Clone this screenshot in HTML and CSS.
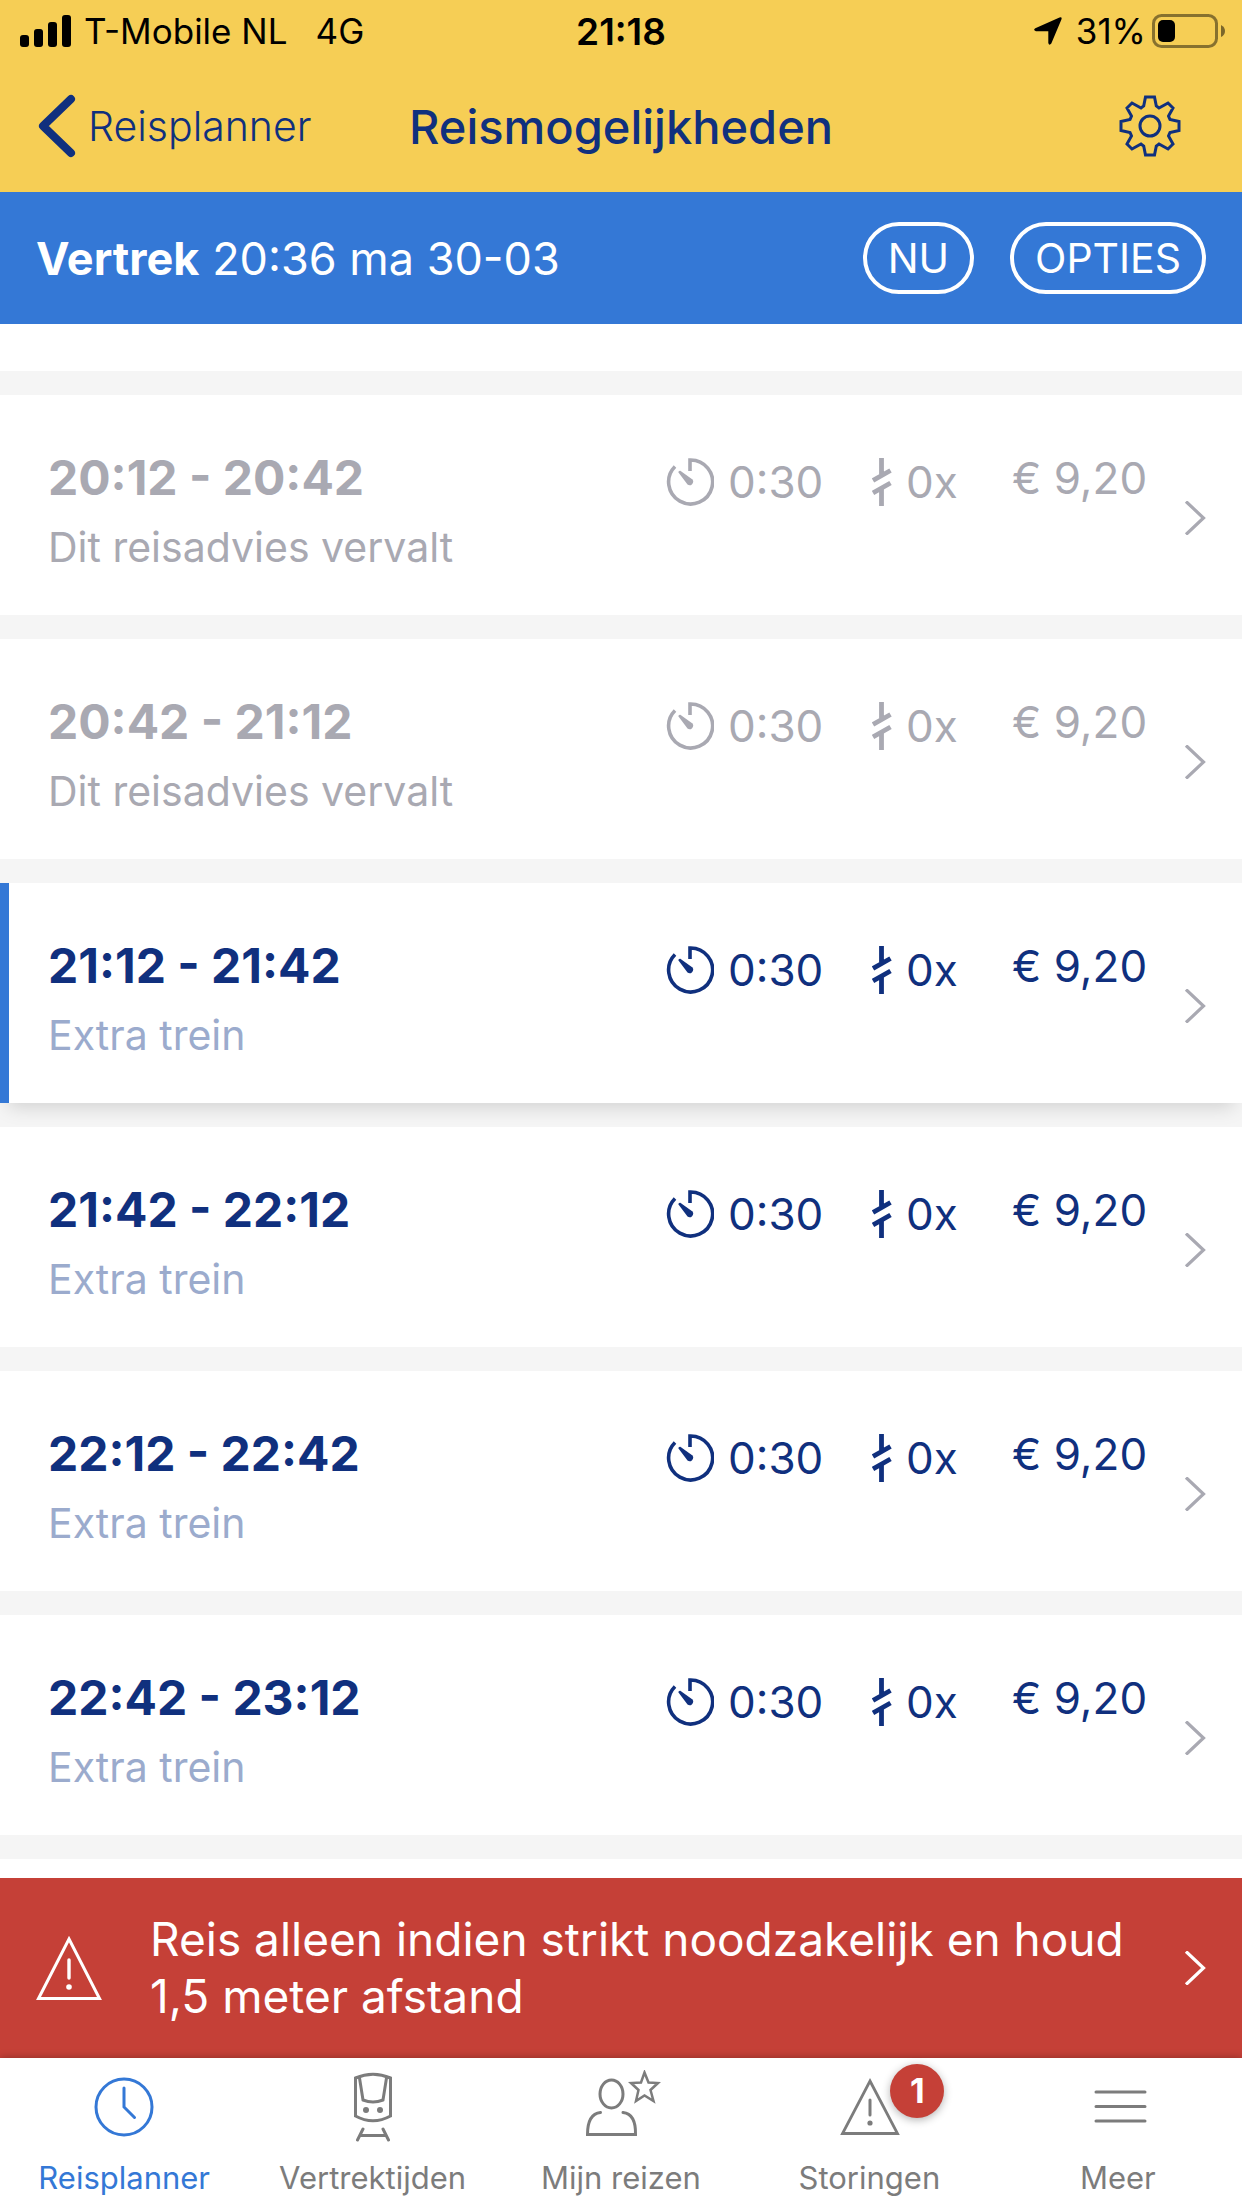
FILE: index.html
```html
<!DOCTYPE html>
<html lang="nl">
<head>
    <meta charset="UTF-8">
    <meta name="viewport" content="width=device-width, initial-scale=1.0">
    <title>Reismogelijkheden</title>
    <link rel="stylesheet" href="styles.css">
</head>
<body>

<!-- Iconen die vaker voorkomen -->
<svg class="sprite" aria-hidden="true">
    <symbol id="duur" viewBox="0 0 48 48">
        <path d="M24 13V2A22 22 0 1 1 9 8.500" fill="none" stroke="currentColor" stroke-width="3.600"/>
        <path d="M12.300 14.200Q12.400 12.500 14.300 12.700L26.500 21.600A3.600 3.600 0 0 1 21.500 26.600Z" fill="currentColor"/>
    </symbol>
    <symbol id="overstap" viewBox="0 0 20 48">
        <path d="M9.500 0V17M1 22.500L18.500 12.500M1 35L18.500 25M9.500 31V48" fill="none" stroke="currentColor" stroke-width="4.800"/>
    </symbol>
    <symbol id="pijl" viewBox="0 0 22 34">
        <path d="M2 0.500L19.500 17L2 33.500" fill="none" stroke="currentColor" stroke-width="3.200"/>
    </symbol>
    <symbol id="waarschuwing" viewBox="0 0 66 66">
        <path d="M33 4L63.500 63.500H2.500Z" fill="none" stroke="currentColor" stroke-width="3"/>
        <path d="M33 25V43" stroke="currentColor" stroke-width="3.400" stroke-linecap="round"/>
        <circle cx="33" cy="52" r="2.800" fill="currentColor"/>
    </symbol>
</svg>

<header class="header">
    <div class="status">
        <div class="status-left">
            <svg class="signal" viewBox="0 0 52 32">
                <rect x="0" y="20" width="9" height="12" rx="3"/>
                <rect x="14" y="14" width="9" height="18" rx="3"/>
                <rect x="28" y="7" width="9" height="25" rx="3"/>
                <rect x="42" y="0" width="9" height="32" rx="3"/>
            </svg>
            <span>T-Mobile NL</span>
            <span class="network">4G</span>
        </div>
        <div class="clock">21:18</div>
        <div class="status-right">
            <svg class="location" viewBox="0 0 28 28"><path d="M25.500 0.500Q28.500 -0.500 27.300 2.800L17.300 26.500Q15.200 29 14.300 26V14.200H2Q-1.300 13.300 1.300 11.200Z"/></svg>
            <span>31%</span>
            <svg class="battery" viewBox="0 0 74 36">
                <rect x="1.500" y="2.500" width="63" height="31" rx="8" fill="none" stroke="#000" stroke-opacity="0.45" stroke-width="3"/>
                <rect x="6" y="7" width="17" height="22" rx="5"/>
                <path d="M69 12Q73 14 73 18T69 24Z" fill-opacity="0.500"/>
            </svg>
        </div>
    </div>
    <div class="navbar">
        <a class="back" href="#">
            <svg viewBox="0 0 38 64"><path d="M33 5L5 32L33 59" fill="none" stroke="currentColor" stroke-width="8" stroke-linecap="round" stroke-linejoin="round"/></svg>
            Reisplanner
        </a>
        <h1>Reismogelijkheden</h1>
        <button class="settings" type="button" aria-label="Instellingen">
            <svg viewBox="0 0 64 64" fill="none" stroke="currentColor" stroke-width="3">
                <path d="M27.500 3H36.500L38.300 12L41 14L50 9L55 14L50.500 22L52 25.500L61 27.500V36.500L52 38.500L50.500 42L55 50L50 55L41 50L38.300 52L36.500 61H27.500L25.700 52L23 50L14 55L9 50L13.500 42L12 38.500L3 36.500V27.500L12 25.500L13.500 22L9 14L14 9L23 14L25.700 12Z"/>
                <circle cx="32" cy="32" r="10"/>
            </svg>
        </button>
    </div>
</header>

<div class="departure">
    <p><strong>Vertrek</strong> 20:36 ma 30-03</p>
    <button type="button">NU</button>
    <button type="button">OPTIES</button>
</div>

<main class="trips">
    <div class="trip-top"></div>
    <a class="trip expired" href="#">
        <div class="info"><h2>20:12 - 20:42</h2><p>Dit reisadvies vervalt</p></div>
        <div class="stat duration"><svg><use href="#duur"/></svg>0:30</div>
        <div class="stat changes"><svg><use href="#overstap"/></svg>0x</div>
        <div class="stat price">€ 9,20</div>
        <svg class="arrow"><use href="#pijl"/></svg>
    </a>
    <a class="trip expired" href="#">
        <div class="info"><h2>20:42 - 21:12</h2><p>Dit reisadvies vervalt</p></div>
        <div class="stat duration"><svg><use href="#duur"/></svg>0:30</div>
        <div class="stat changes"><svg><use href="#overstap"/></svg>0x</div>
        <div class="stat price">€ 9,20</div>
        <svg class="arrow"><use href="#pijl"/></svg>
    </a>
    <a class="trip selected" href="#">
        <div class="info"><h2>21:12 - 21:42</h2><p>Extra trein</p></div>
        <div class="stat duration"><svg><use href="#duur"/></svg>0:30</div>
        <div class="stat changes"><svg><use href="#overstap"/></svg>0x</div>
        <div class="stat price">€ 9,20</div>
        <svg class="arrow"><use href="#pijl"/></svg>
    </a>
    <a class="trip" href="#">
        <div class="info"><h2>21:42 - 22:12</h2><p>Extra trein</p></div>
        <div class="stat duration"><svg><use href="#duur"/></svg>0:30</div>
        <div class="stat changes"><svg><use href="#overstap"/></svg>0x</div>
        <div class="stat price">€ 9,20</div>
        <svg class="arrow"><use href="#pijl"/></svg>
    </a>
    <a class="trip" href="#">
        <div class="info"><h2>22:12 - 22:42</h2><p>Extra trein</p></div>
        <div class="stat duration"><svg><use href="#duur"/></svg>0:30</div>
        <div class="stat changes"><svg><use href="#overstap"/></svg>0x</div>
        <div class="stat price">€ 9,20</div>
        <svg class="arrow"><use href="#pijl"/></svg>
    </a>
    <a class="trip" href="#">
        <div class="info"><h2>22:42 - 23:12</h2><p>Extra trein</p></div>
        <div class="stat duration"><svg><use href="#duur"/></svg>0:30</div>
        <div class="stat changes"><svg><use href="#overstap"/></svg>0x</div>
        <div class="stat price">€ 9,20</div>
        <svg class="arrow"><use href="#pijl"/></svg>
    </a>
    <div class="trip-rest"></div>
</main>

<a class="alert" href="#">
    <svg class="alert-icon"><use href="#waarschuwing"/></svg>
    <p>Reis alleen indien strikt noodzakelijk en houd 1,5 meter afstand</p>
    <svg class="arrow"><use href="#pijl"/></svg>
</a>

<nav class="tabs">
    <a class="active" href="#">
        <svg viewBox="0 0 80 72" fill="none" stroke="currentColor" stroke-width="3" stroke-linecap="round">
            <circle cx="40" cy="37" r="28"/>
            <path d="M40 18V37L50.500 47.500"/>
        </svg>
        Reisplanner
    </a>
    <a href="#">
        <svg viewBox="0 0 80 72" fill="none" stroke="currentColor" stroke-width="3" stroke-linecap="round">
            <path d="M22.500 8Q40 0.500 57.500 8V46Q40 55.500 22.500 46Z"/>
            <path d="M26.500 8L30 30Q40 34 50 30L53.500 8"/>
            <path d="M30 59L24.500 70M50 59L55.500 70M28 65.500H52"/>
            <circle cx="33" cy="40" r="3" fill="currentColor" stroke="none"/>
            <circle cx="47" cy="40" r="3" fill="currentColor" stroke="none"/>
        </svg>
        Vertrektijden
    </a>
    <a href="#">
        <svg viewBox="0 0 80 72" fill="none" stroke="currentColor" stroke-width="3" stroke-linecap="round">
            <ellipse cx="30.500" cy="24" rx="11.500" ry="14"/>
            <path d="M19.500 42.500Q6.500 44 6.500 64.500H54.500Q55 44 42 42.500"/>
            <path d="M63.500 2.500L67.500 12.500L77 13L69.500 20L72.500 31L63.500 25.500L55 31L57.500 20L50 13L60 12.500Z" stroke-width="2.500" stroke-linecap="butt"/>
        </svg>
        Mijn reizen
    </a>
    <a href="#">
        <span class="tab-icon">
            <svg viewBox="0 0 80 72" fill="none" stroke="currentColor" stroke-width="2.800">
                <path d="M41 11L68.500 63.500H13.500Z"/>
                <path d="M41 30V45" stroke-width="3" stroke-linecap="round"/>
                <circle cx="41" cy="53" r="2.600" fill="currentColor" stroke="none"/>
            </svg>
            <span class="badge">1</span>
        </span>
        Storingen
    </a>
    <a href="#">
        <svg viewBox="0 0 80 72" fill="none" stroke="currentColor" stroke-width="3" stroke-linecap="round">
            <path d="M18 22H67M18 36.500H67M18 51H67"/>
        </svg>
        Meer
    </a>
</nav>

</body>
</html>
```

FILE: styles.css
```css
* {
    box-sizing: border-box;
}
body {
    margin: 0;
    min-height: 100vh;
    display: flex;
    flex-direction: column;
    font-family: Inter, "Liberation Sans", sans-serif;
    color: #10307e;
    background: white;
}
h1, h2, p {
    margin: 0;
}
a {
    color: inherit;
    text-decoration: none;
}
button {
    font: inherit;
    color: inherit;
    background: none;
    border: none;
    padding: 0;
    cursor: pointer;
}
svg {
    display: block;
    flex-shrink: 0;
}
.sprite {
    position: absolute;
    width: 0;
    height: 0;
}

/* Kop */
.header {
    background: #f6ce55;
}
.status {
    display: grid;
    grid-template-columns: 1fr auto 1fr;
    align-items: center;
    height: 60px;
    padding: 2px 16px 0;
    color: black;
    font-size: 35px;
}
.status-left, .status-right {
    display: flex;
    align-items: center;
}
.status-right {
    justify-content: flex-end;
}
.signal {
    width: 52px;
    height: 32px;
    margin: 0 12px 0 4px;
}
.network {
    margin-left: 28px;
}
.clock {
    font-size: 37px;
    font-weight: 600;
}
.location {
    width: 28px;
    height: 28px;
    margin-right: 14px;
}
.battery {
    width: 74px;
    height: 36px;
    margin-left: 6px;
}
.navbar {
    display: grid;
    grid-template-columns: 1fr auto 1fr;
    align-items: center;
    height: 132px;
    padding: 0 38px;
}
.back {
    display: flex;
    align-items: center;
    gap: 12px;
    font-size: 41px;
    font-weight: 300;
}
.back svg {
    width: 38px;
    height: 64px;
}
h1 {
    font-size: 47px;
    font-weight: 500;
}
.settings {
    justify-self: end;
    margin-right: 22px;
}
.settings svg {
    width: 64px;
    height: 64px;
}

/* Vertrektijd */
.departure {
    display: flex;
    align-items: center;
    gap: 36px;
    height: 132px;
    padding: 0 36px;
    background: #3478d6;
    color: white;
}
.departure p {
    flex: 1;
    font-size: 45px;
}
.departure button {
    height: 72px;
    padding: 0 21px;
    border: 4px solid white;
    border-radius: 36px;
    font-size: 41px;
}

/* Reisadviezen */
.trips {
    flex: 1;
    display: flex;
    flex-direction: column;
    gap: 24px;
    background: #f5f5f5;
}
.trip-top {
    height: 47px;
    background: white;
}
.trip-rest {
    flex: 1;
    background: white;
}
.trip {
    display: grid;
    grid-template-columns: 1fr 206px 140px 172px 22px;
    align-items: start;
    height: 220px;
    padding: 54px 36px 0 48px;
    background: white;
}
.trip h2 {
    font-size: 48px;
    line-height: 58px;
    font-weight: 700;
}
.trip p {
    margin-top: 12px;
    font-size: 41px;
    line-height: 56px;
    color: #9babcd;
}
.stat {
    display: flex;
    align-items: center;
    height: 66px;
    font-size: 44px;
}
.duration svg {
    width: 48px;
    height: 48px;
    margin-right: 14px;
}
.changes svg {
    width: 20px;
    height: 48px;
    margin-right: 14px;
}
.price {
    height: 58px;
}
.arrow {
    width: 22px;
    height: 34px;
}
.trip .arrow {
    margin-top: 52px;
    color: #a9a9b2;
}
.expired, .trip.expired p {
    color: #a9a9b2;
}
.selected {
    padding-left: 39px;
    border-left: 9px solid #3478d6;
    box-shadow: 0 12px 18px -8px rgba(0, 0, 0, 0.15);
}

/* Melding */
.alert {
    display: flex;
    align-items: center;
    height: 180px;
    padding: 0 36px;
    background: #c54037;
    color: white;
}
.alert-icon {
    width: 66px;
    height: 66px;
}
.alert p {
    flex: 1;
    margin: 0 60px 0 48px;
    font-size: 46px;
    line-height: 57px;
}

/* Tabbalk */
.tabs {
    position: relative;
    display: grid;
    grid-template-columns: repeat(5, 1fr);
    height: 150px;
    background: white;
    box-shadow: 0 0 8px rgba(0, 0, 0, 0.3);
}
.tabs a {
    display: flex;
    flex-direction: column;
    align-items: center;
    gap: 16px;
    padding-top: 12px;
    font-size: 31px;
    line-height: 40px;
    color: #7c7c7c;
}
.tabs a.active {
    color: #3478d6;
}
.tabs svg {
    width: 80px;
    height: 72px;
}
.tab-icon {
    position: relative;
}
.badge {
    position: absolute;
    top: -6px;
    left: 61px;
    width: 54px;
    height: 54px;
    border-radius: 50%;
    background: #c54037;
    box-shadow: 0 2px 8px rgba(0, 0, 0, 0.3);
    color: white;
    font-size: 34px;
    font-weight: 700;
    line-height: 54px;
    text-align: center;
}
```
